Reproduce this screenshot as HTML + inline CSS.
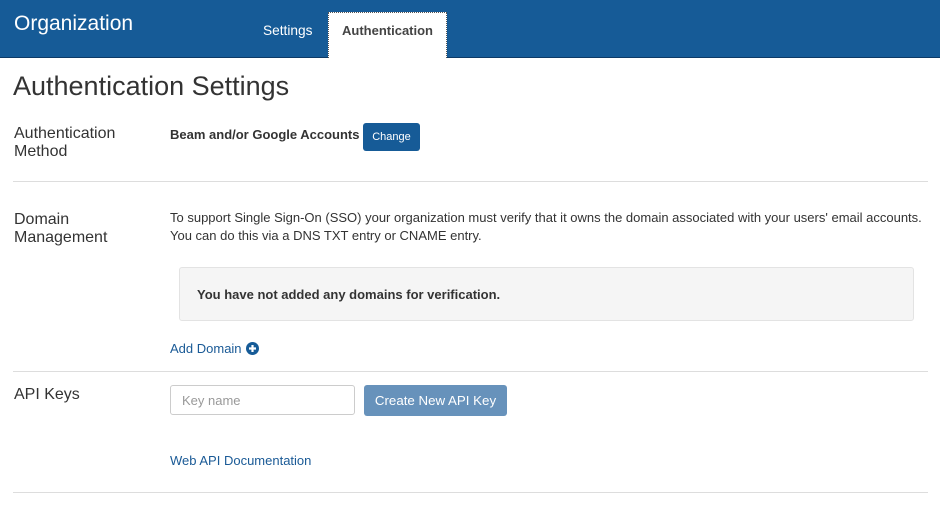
<!DOCTYPE html>
<html><head><style>
body{margin:0;width:940px;height:516px;background:#fff;font-family:"Liberation Sans",Arial,sans-serif;color:#333;position:relative;overflow:hidden}
.a{position:absolute;white-space:nowrap}
.hdr{position:absolute;left:0;top:0;width:940px;height:57px;background:#165b97;border-bottom:1px solid #0d3a66}
.hr{position:absolute;left:13px;width:915px;height:1px;background:#ddd}
a{color:#1a5a96;text-decoration:none}
</style></head><body>
<div class="hdr"></div>
<div class="a" style="left:14px;top:12px;font-size:21px;color:#fff">Organization</div>
<div class="a" style="left:263px;top:23px;font-size:13.7px;color:#fff">Settings</div>
<div class="a" style="left:328px;top:12px;width:119px;height:46px;background:#fff;border:1px dotted #555;border-bottom:none;box-sizing:border-box"></div>
<div class="a" style="left:342px;top:23px;font-size:13px;font-weight:bold;color:#444">Authentication</div>
<div class="a" style="left:13px;top:71px;font-size:27px;color:#333">Authentication Settings</div>
<div class="a" style="left:14px;top:125px;font-size:16px;line-height:18px">Authentication<br>Method</div>
<div class="a" style="left:170px;top:127px;font-size:13px;font-weight:bold">Beam and/or Google Accounts</div>
<div class="a" style="left:363px;top:123px;width:57px;height:28px;background:#165b97;border-radius:3px;color:#fff;font-size:11px;text-align:center;line-height:28px">Change</div>
<div class="hr" style="top:181px"></div>
<div class="a" style="left:14px;top:211px;font-size:16px;line-height:18px">Domain<br>Management</div>
<div class="a" style="left:170px;top:209px;font-size:13px;line-height:18px">To support Single Sign-On (SSO) your organization must verify that it owns the domain associated with your users' email accounts.<br>You can do this via a DNS TXT entry or CNAME entry.</div>
<div class="a" style="left:179px;top:267px;width:735px;height:54px;background:#f5f5f5;border:1px solid #e3e3e3;border-radius:3px;box-sizing:border-box"></div>
<div class="a" style="left:197px;top:287px;font-size:13px;font-weight:bold">You have not added any domains for verification.</div>
<div class="a" style="left:170px;top:341px;font-size:13px"><a>Add Domain</a></div>
<svg class="a" style="left:246px;top:342px" width="13" height="13" viewBox="0 0 13 13"><circle cx="6.5" cy="6.5" r="6.5" fill="#165b97"/><path d="M6.5 3v7M3 6.5h7" stroke="#fff" stroke-width="2.2"/></svg>
<div class="hr" style="top:371px"></div>
<div class="a" style="left:14px;top:386px;font-size:16px">API Keys</div>
<div class="a" style="left:170px;top:385px;width:185px;height:30px;border:1px solid #ccc;border-radius:3px;box-sizing:border-box"></div>
<div class="a" style="left:182px;top:393px;font-size:13px;color:#999">Key name</div>
<div class="a" style="left:364px;top:385px;width:143px;height:31px;background:#6792bb;border-radius:3px;color:#fff;font-size:13.3px;text-align:center;line-height:31px">Create New API Key</div>
<div class="a" style="left:170px;top:453px;font-size:13px"><a>Web API Documentation</a></div>
<div class="hr" style="top:492px"></div>
</body></html>
